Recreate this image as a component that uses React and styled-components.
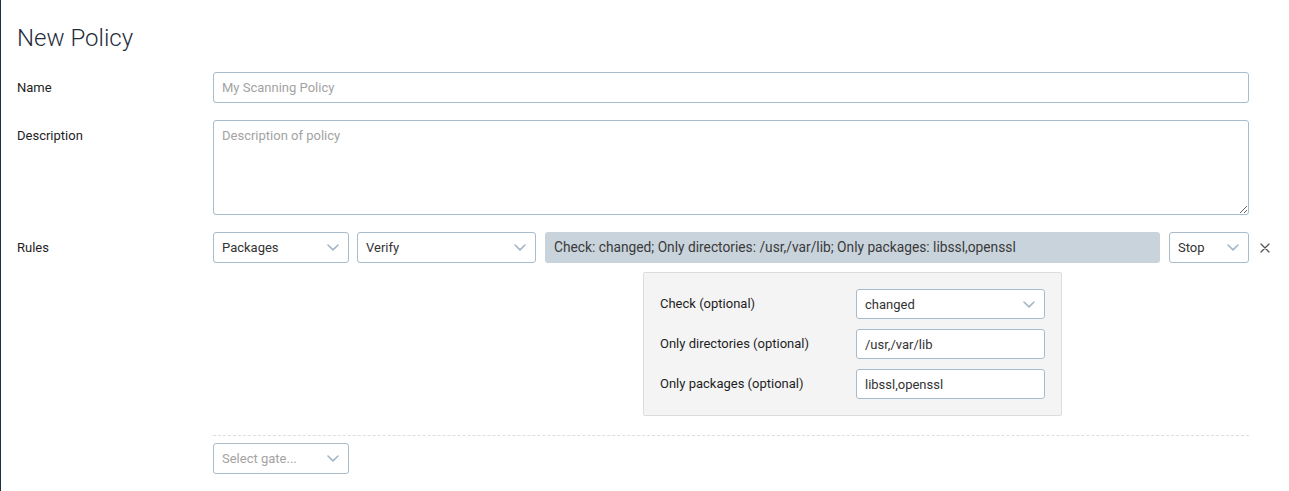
import React from 'react';
import styled, { createGlobalStyle } from 'styled-components';

const GlobalStyle = createGlobalStyle`
    html, body {
        margin: 0;
        padding: 0;
        background: #ffffff;
    }
    body {
        font-family: Roboto, "Liberation Sans", Arial, sans-serif;
        color: #333;
    }
`

const Page = styled.div`
    min-height: 100vh;
    box-sizing: border-box;
    border-left: 1px solid #1b3246;
    padding: 24px 0 17px 16px;
`
const Title = styled.h1`
    margin: 0 0 19px;
    font-size: 24px;
    line-height: 29px;
    font-weight: 300;
    color: #1f2d3b;
`
const Form = styled.div`
    display: grid;
    grid-template-columns: 196px 1036px;
    row-gap: 17px;
`
const Label = styled.div`
    font-size: 13px;
    font-weight: 400;
    line-height: 31px;
    color: #1e1e1e;
`
const TextInput = styled.input`
    box-sizing: border-box;
    width: 100%;
    height: ${p => p.$h || 31}px;
    padding: 0 8px;
    border: 1px solid #a9bccb;
    border-radius: 3px;
    background: #fff;
    font-family: inherit;
    font-size: 13px;
    color: #333;
    outline: none;
    &::placeholder {
        color: #a3a3a3;
    }
`
const TextArea = styled.textarea`
    box-sizing: border-box;
    display: block;
    width: 100%;
    height: 95px;
    padding: 7px 8px;
    border: 1px solid #a9bccb;
    border-radius: 3px;
    font-family: inherit;
    font-size: 13px;
    color: #333;
    resize: vertical;
    outline: none;
    &::placeholder {
        color: #a3a3a3;
    }
`
const RulesRow = styled.div`
    display: flex;
    align-items: flex-start;
    gap: 8px;
    position: relative;
`
const SelectBox = styled.div`
    box-sizing: border-box;
    flex: none;
    width: ${p => p.$w}px;
    height: ${p => p.$h || 31}px;
    display: flex;
    align-items: center;
    justify-content: space-between;
    padding: 0 9px 0 8px;
    border: 1px solid #a9bccb;
    border-radius: 3px;
    background: #fff;
    font-size: 13px;
    color: ${p => (p.$placeholder ? '#a3a3a3' : '#333')};
`
const SummaryCol = styled.div`
    flex: none;
    width: 615px;
    margin: 0 1px;
    display: flex;
    flex-direction: column;
    align-items: center;
`
const Summary = styled.div`
    box-sizing: border-box;
    width: 100%;
    height: 31px;
    line-height: 31px;
    padding: 0 9px;
    background: #c9d3dc;
    border-radius: 3px;
    font-size: 13.75px;
    color: #3a3a3a;
    white-space: nowrap;
    overflow: hidden;
`
const Params = styled.div`
    box-sizing: border-box;
    margin-top: 9px;
    width: 419px;
    padding: 16px;
    background: #f4f4f4;
    border: 1px solid #dcdcdc;
    border-radius: 2px;
    display: grid;
    grid-template-columns: 196px 189px;
    row-gap: 10px;
`
const ParamLabel = styled.div`
    font-size: 13px;
    font-weight: 400;
    line-height: 30px;
    color: #1e1e1e;
`
const RemoveButton = styled.button`
    position: absolute;
    left: 1044px;
    top: 8px;
    width: 16px;
    height: 16px;
    padding: 0;
    border: none;
    background: none;
    display: flex;
    align-items: center;
    justify-content: center;
    cursor: pointer;
`
const AddRow = styled.div`
    grid-column: 2;
    margin-top: 2px;
    padding-top: 7px;
    border-top: 1px dashed #dedede;
`

const Chevron = () => (
    <svg width="12" height="7" viewBox="0 0 12 7" fill="none">
        <path d="M1 1l5 4.8L11 1" stroke="#a3b6c6" strokeWidth="1.6" strokeLinecap="round" strokeLinejoin="round" />
    </svg>
)

const Select = ({ value, width, height, placeholder }) => (
    <SelectBox $w={width} $h={height} $placeholder={placeholder}>
        <span>{value}</span>
        <Chevron />
    </SelectBox>
)

const App = () => {
    return (
        <Page>
            <GlobalStyle />
            <Title>New Policy</Title>
            <Form>
                <Label>Name</Label>
                <TextInput placeholder="My Scanning Policy" />

                <Label>Description</Label>
                <TextArea placeholder="Description of policy" />

                <Label>Rules</Label>
                <RulesRow>
                    <Select value="Packages" width={136} />
                    <Select value="Verify" width={179} />
                    <SummaryCol>
                        <Summary>Check: changed; Only directories: /usr,/var/lib; Only packages: libssl,openssl</Summary>
                        <Params>
                            <ParamLabel>Check (optional)</ParamLabel>
                            <Select value="changed" width={189} height={30} />
                            <ParamLabel>Only directories (optional)</ParamLabel>
                            <TextInput $h={30} defaultValue="/usr,/var/lib" />
                            <ParamLabel>Only packages (optional)</ParamLabel>
                            <TextInput $h={30} defaultValue="libssl,openssl" />
                        </Params>
                    </SummaryCol>
                    <Select value="Stop" width={80} />
                    <RemoveButton aria-label="Remove rule">
                        <svg width="10" height="10" viewBox="0 0 10 10">
                            <path d="M1 1l8 8M9 1l-8 8" stroke="#555" strokeWidth="1.3" strokeLinecap="round" />
                        </svg>
                    </RemoveButton>
                </RulesRow>

                <AddRow>
                    <Select value="Select gate..." width={136} placeholder />
                </AddRow>
            </Form>
        </Page>
    );
};

export default App;
